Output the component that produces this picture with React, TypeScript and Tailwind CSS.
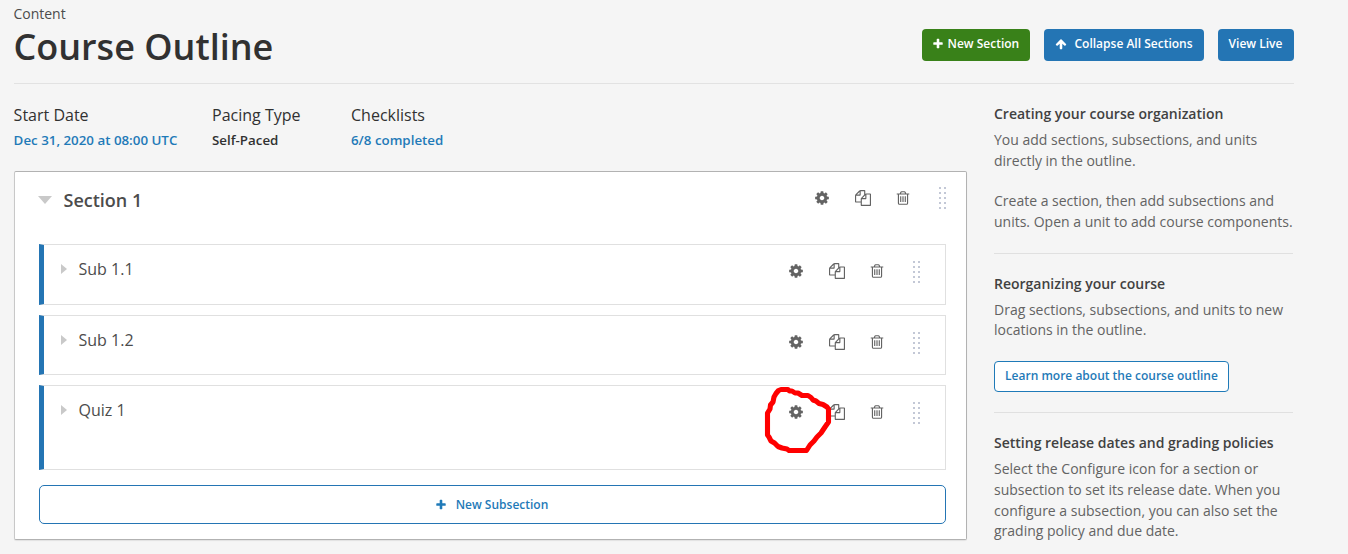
import type { ReactNode } from "react";

const paths = {
  cog: "M1152 896q0-106-75-181t-181-75-181 75-75 181 75 181 181 75 181-75 75-181zm512-109v222q0 12-8 23t-20 13l-185 28q-19 54-39 91 35 50 107 138 10 12 10 25t-9 23q-27 37-99 108t-94 71q-12 0-26-9l-138-108q-44 23-91 38-16 136-29 186-7 28-36 28h-222q-14 0-24.5-8.5t-11.5-21.5l-28-184q-49-16-90-37l-141 107q-10 9-25 9-14 0-25-11-126-114-165-168-7-10-7-23 0-12 8-23 15-21 51-66.5t54-70.5q-27-50-41-99l-183-27q-13-2-21-12.5t-8-23.5v-222q0-12 8-23t19-13l186-28q14-46 39-92-40-57-107-138-10-12-10-24 0-10 9-23 26-36 98.5-107.5t94.5-71.5q13 0 26 10l138 107q44-23 91-38 16-136 29-186 7-28 36-28h222q14 0 24.5 8.5t11.5 21.5l28 184q49 16 90 37l142-107q9-9 24-9 13 0 25 10 129 119 165 170 7 8 7 22 0 12-8 23-15 21-51 66.5t-54 70.5q26 50 41 98l183 28q13 2 21 12.5t8 23.5z",
  files: "M1696 384q40 0 68 28t28 68v1216q0 40-28 68t-68 28h-960q-40 0-68-28t-28-68v-288h-544q-40 0-68-28t-28-68v-672q0-40 20-88t48-76l408-408q28-28 76-48t88-20h416q40 0 68 28t28 68v328q68-40 128-40h416zm-544 213l-299 299h299v-299zm-640-384l-299 299h299v-299zm196 647l316-316v-416h-384v416q0 40-28 68t-68 28h-416v640h512v-256q0-40 20-88t48-76zm956 804v-1152h-384v416q0 40-28 68t-68 28h-416v640h896z",
  trash: "M704 736v576q0 14-9 23t-23 9h-64q-14 0-23-9t-9-23v-576q0-14 9-23t23-9h64q14 0 23 9t9 23zm256 0v576q0 14-9 23t-23 9h-64q-14 0-23-9t-9-23v-576q0-14 9-23t23-9h64q14 0 23 9t9 23zm256 0v576q0 14-9 23t-23 9h-64q-14 0-23-9t-9-23v-576q0-14 9-23t23-9h64q14 0 23 9t9 23zm128 724v-948h-896v948q0 22 7 40.5t14.5 27 10.5 8.5h832q3 0 10.5-8.5t14.5-27 7-40.5zm-672-1076h448l-48-117q-7-9-17-11h-317q-10 2-17 11zm928 32v64q0 14-9 23t-23 9h-96v948q0 83-47 143.5t-113 60.5h-832q-66 0-113-58.5t-47-141.5v-952h-96q-14 0-23-9t-9-23v-64q0-14 9-23t23-9h309l70-167q15-37 54-63t79-26h320q40 0 79 26t54 63l70 167h309q14 0 23 9t9 23z",
  plus: "M1600 736v192q0 40-28 68t-68 28h-416v416q0 40-28 68t-68 28h-192q-40 0-68-28t-28-68v-416h-416q-40 0-68-28t-28-68v-192q0-40 28-68t68-28h416v-416q0-40 28-68t68-28h192q40 0 68 28t28 68v416h416q40 0 68 28t28 68z",
  arrowUp: "M1675 971q0 51-37 90l-75 75q-38 38-91 38-54 0-90-38l-294-293v704q0 52-37.5 84.5t-90.5 32.5h-128q-53 0-90.5-32.5t-37.5-84.5v-704l-294 293q-36 38-90 38t-90-38l-75-75q-38-38-38-90 0-53 38-91l651-651q35-37 90-37 54 0 91 37l651 651q37 39 37 91z",
};

function Icon({ name, className }: { name: keyof typeof paths; className: string }) {
  return (
    <svg viewBox="0 0 1792 1792" className={className} fill="currentColor" aria-hidden="true">
      <path d={paths[name]} />
    </svg>
  );
}

function DragHandle() {
  return (
    <div className="grid w-[7px] grid-cols-2 gap-[3px]">
      {Array.from({ length: 10 }, (_, i) => (
        <span key={i} className="size-[2px] bg-[#c3c8d6]" />
      ))}
    </div>
  );
}

function Actions({ iconsClass }: { iconsClass: string }) {
  return (
    <div className="flex h-[22px] items-center text-[#636363]">
      <div className={`flex ${iconsClass}`}>
        <Icon name="cog" className="size-4" />
        <Icon name="files" className="ml-[25px] size-4" />
        <Icon name="trash" className="ml-[24.5px] size-4" />
      </div>
      <div className="ml-7">
        <DragHandle />
      </div>
    </div>
  );
}

function Subsection({ title, className }: { title: string; className: string }) {
  return (
    <div className={`flex items-start border border-l-[5px] border-[#e0e0e0] border-l-[#2475b4] pr-[25px] ${className}`}>
      <svg viewBox="0 0 6 10" className="mt-[19px] ml-[17px] h-[10px] w-[6px]" fill="#c9c9c9">
        <path d="M0 0L6 5L0 10Z" />
      </svg>
      <h3 className="mt-3 ml-[11.5px] flex-1 text-base leading-6 text-[#4c4c4c]">{title}</h3>
      <div className="mt-4">
        <Actions iconsClass="pb-[2px]" />
      </div>
    </div>
  );
}

function Stat({ label, value, className }: { label: string; value: string; className: string }) {
  return (
    <div className={className}>
      <div className="text-base leading-6 text-[#313131]">{label}</div>
      <div className="mt-[3px] text-[13.33px] leading-5 font-semibold">{value}</div>
    </div>
  );
}

function Help({ title, children }: { title: string; children: ReactNode }) {
  return (
    <section>
      <h3 className="text-sm leading-5 font-semibold text-[#414141]">{title}</h3>
      <div className="mt-[6px] text-sm leading-[20.8px] text-[#636363]">{children}</div>
    </section>
  );
}

export default function App() {
  return (
    <div className="h-[554px] w-[1348px] overflow-hidden bg-[#f5f5f5] pl-[14px] font-['Open_Sans',sans-serif] whitespace-nowrap antialiased">
      <header className="flex h-[84px] w-[1280px] justify-between border-b border-[#e2e2e2]">
        <div className="-ml-[0.6px]">
          <div className="mt-1 text-sm leading-5 text-[#4c4c4c]">Content</div>
          <h1 className="text-4xl leading-[46px] font-semibold text-[#313131]">Course Outline</h1>
        </div>
        <div className="mt-[29px] flex gap-[14px] text-xs font-semibold text-white">
          <button className="flex h-8 w-[108px] items-center rounded-[4px] bg-[#398119] pb-[2px] pl-[9.5px]">
            <Icon name="plus" className="size-3" />
            <span className="ml-1">New Section</span>
          </button>
          <button className="flex h-8 w-40 items-center rounded-[4px] bg-[#2475b4] pb-[2px] pl-[11px]">
            <Icon name="arrowUp" className="size-3" />
            <span className="ml-[7.5px]">Collapse All Sections</span>
          </button>
          <button className="flex h-8 w-[76px] items-center justify-center rounded-[4px] bg-[#2475b4] pr-px pb-[2px]">View Live</button>
        </div>
      </header>

      <div className="flex">
        <main className="w-[953px]">
          <div className="mt-[19px] -ml-[0.4px] flex h-[68px]">
            <Stat label="Start Date" value="Dec 31, 2020 at 08:00 UTC" className="w-[198.4px] text-[#1f7ab8]" />
            <Stat label="Pacing Type" value="Self-Paced" className="w-[139px] text-[#313131]" />
            <Stat label="Checklists" value="6/8 completed" className="text-[#1f7ab8]" />
          </div>

          <div className="relative h-[369px] rounded-[2px] border border-[#b2b2b2] border-l-[#c8c8c8] bg-white px-[24px] shadow-[0_1px_1px_rgba(0,0,0,0.08)]">
            <div className="flex h-[72px] items-start">
              <svg viewBox="0 0 14 8" className="mt-6 -ml-px h-2 w-[14px]" fill="#c9c9c9">
                <path d="M0 0H14L7 8Z" />
              </svg>
              <h2 className="mt-4 ml-[11.5px] flex-1 text-lg leading-6 font-semibold text-[#4c4c4c]">Section 1</h2>
              <div className="mt-[15px] -mr-1">
                <Actions iconsClass="" />
              </div>
            </div>
            <div className="flex w-[907px] flex-col">
              <Subsection title="Sub 1.1" className="h-[61px]" />
              <Subsection title="Sub 1.2" className="mt-[10px] h-[60px]" />
              <Subsection title="Quiz 1" className="mt-[10px] h-[85px]" />
              <button className="mt-[15px] flex h-[39px] items-center justify-center rounded-[5px] border border-[#2475b4] pr-[2px] text-xs font-semibold text-[#1f7ab8]">
                <Icon name="plus" className="size-3" />
                <span className="ml-[9px]">New Subsection</span>
              </button>
            </div>
            <svg viewBox="740 370 110 90" className="absolute top-[198px] left-[725px] h-[90px] w-[110px]" fill="none" stroke="#ff0000" strokeWidth="5.1" strokeLinejoin="round">
              <path d="M781 389.5H788L789.5 391H792L795 393H798L802 395.5H808L811 397.5L813 400L816 401L819 403.5L823 404.5L827 407L828.5 409V422L825 427L821 433L817 437L814 441L810 445L806.5 450.5H789L787 449L782 448L778 446.5L774.5 443L771 441L769 437L767.5 435V413L770 409L770.5 405L773 402L774 397L776 393.5L778.5 390.5Z" />
            </svg>
          </div>
        </main>

        <aside className="ml-[27px] w-[299px] pt-5">
          <Help title="Creating your course organization">
            <p>You add sections, subsections, and units<br />directly in the outline.</p>
            <p className="mt-[19.3px]">Create a section, then add subsections and<br />units. Open a unit to add course components.</p>
          </Help>
          <hr className="mt-[20.5px] mb-[19.6px] border-[#e0e0e0]" />
          <Help title="Reorganizing your course">
            <p>Drag sections, subsections, and units to new<br />locations in the outline.</p>
          </Help>
          <button className="mt-[19.8px] flex h-[31px] w-[235px] items-center justify-center rounded-[4px] border border-[#1f7ab8] bg-white text-xs font-semibold text-[#1f7ab8]">
            Learn more about the course outline
          </button>
          <hr className="mt-5 mb-5 border-[#e0e0e0]" />
          <Help title="Setting release dates and grading policies">
            <p>Select the Configure icon for a section or<br />subsection to set its release date. When you<br />configure a subsection, you can also set the<br />grading policy and due date.</p>
          </Help>
        </aside>
      </div>
    </div>
  );
}
